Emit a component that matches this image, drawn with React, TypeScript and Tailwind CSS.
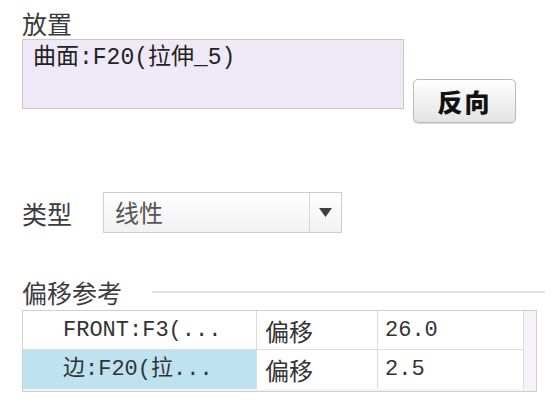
import React from "react";

const CJK = "font-['Noto_Sans_CJK_SC',sans-serif]";
const MONO = "font-['Liberation_Mono','Noto_Sans_CJK_SC',monospace]";

const ROWS = [
  { ref: "FRONT:F3(...", kind: "偏移", value: "26.0", selected: false },
  { ref: "边:F20(拉...", kind: "偏移", value: "2.5", selected: true },
];

export default function App() {
  return (
    <div className="w-[560px] h-[410px] bg-white pl-[22px] pr-[15px] pt-[9px] text-[#333]">
      {/* Placement */}
      <div className={`${CJK} text-[25px] leading-[28px] text-[#3c3c3c]`}>放置</div>
      <div className="flex items-start mt-[2px]">
        <div className="w-[382px] h-[70px] border border-[#c9c9c9] bg-[#efe9f7] pl-[10px] pt-[4px]">
          <span className={`${MONO} text-[23px] leading-[28px] text-[#222]`}>曲面:F20(拉伸_5)</span>
        </div>
        <button className="ml-[9px] mt-[40px] w-[103px] h-[44px] rounded-[5px] border border-[#b9b9b9] bg-gradient-to-b from-white to-[#e4e4e4] shadow-[0_1px_1px_rgba(0,0,0,0.15)] flex items-center justify-center">
          <span className={`${CJK} text-[25px] font-black leading-none text-[#111] tracking-[2px]`}>反向</span>
        </button>
      </div>

      {/* Type */}
      <div className="flex items-center mt-[69px]">
        <div className={`${CJK} text-[25px] leading-[28px] text-[#3c3c3c] w-[81px]`}>类型</div>
        <div className="flex w-[239px] h-[41px] border border-[#cdcdcd] bg-gradient-to-b from-white to-[#f1f1f1]">
          <div className={`${CJK} flex-1 pl-[11px] text-[24px] leading-[38px] text-[#555]`}>线性</div>
          <div className="w-[32px] border-l border-[#d6d6d6] flex items-center justify-center">
            <svg width="13" height="9" viewBox="0 0 13 9">
              <path d="M0 0H13L6.5 9Z" fill="#3f3f3f" />
            </svg>
          </div>
        </div>
      </div>

      {/* Offset references */}
      <div className="flex items-center mt-[45px]">
        <div className={`${CJK} text-[25px] leading-[28px] text-[#3c3c3c]`}>偏移参考</div>
        <div className="flex-1 ml-[30px] h-[2px] bg-[#e2e2e2]" />
      </div>
      <div className="mt-[4px] w-[515px] border border-[#cfcfcf] bg-[#f6f4fa] pb-[2px] flex">
        <div className="w-[501px] bg-white border-r border-[#dcdcdc]">
          {ROWS.map((r, i) => (
            <div
              key={i}
              className={`grid grid-cols-[233px_121px_1fr] h-[39px] ${i === 0 ? "border-b border-[#dcdcdc]" : ""}`}
            >
              <div
                className={`${MONO} text-[22px] leading-[39px] pl-[40px] text-[#333] whitespace-nowrap ${
                  r.selected ? "bg-[#bfe2f0]" : ""
                }`}
              >
                {r.ref}
              </div>
              <div className={`${CJK} text-[24px] leading-[39px] pl-[8px] border-l border-[#dcdcdc] text-[#333]`}>
                {r.kind}
              </div>
              <div className={`${MONO} text-[22px] leading-[39px] pl-[7px] border-l border-[#dcdcdc] text-[#333]`}>
                {r.value}
              </div>
            </div>
          ))}
        </div>
      </div>
    </div>
  );
}
